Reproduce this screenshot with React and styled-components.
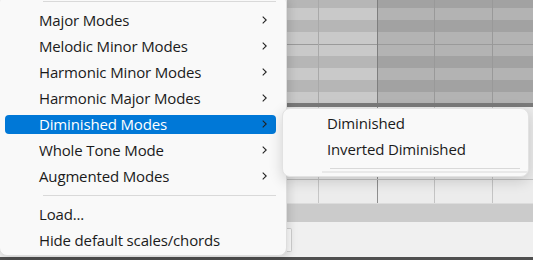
import React from 'react';
import styled, { createGlobalStyle } from 'styled-components';

const GlobalStyle = createGlobalStyle`
  html, body {
    margin: 0;
    padding: 0;
    overflow: hidden;
    background: #f0f0f0;
  }
`;

const Stage = styled.div`
  position: relative;
  width: 533px;
  height: 260px;
  overflow: hidden;
  font-family: 'Open Sans', 'Noto Sans', sans-serif;
  background: #f0f0f0;
`;

const Workspace = styled.div`
  display: flex;
  height: 257px;
`;

const LeftPane = styled.div`
  width: 287px;
  background: #f0f0f0;
`;

const RightPane = styled.div`
  flex: 1;
  display: flex;
  flex-direction: column;
`;

const BottomStrip = styled.div`
  height: 3px;
  background: #4f4f4f;
`;

// piano roll stripes: black-key rows darker, one E/F style boundary line
const tones = {
  light: { hi: '#c9c9c9', lo: '#b6b6b6' },
  dark: { hi: '#b3b3b3', lo: '#a2a2a2' },
};

const stripes = ({ $tone }) => {
  const { hi, lo } = tones[$tone];
  return `linear-gradient(to bottom,
    ${lo} 0 8px, ${hi} 8px 20.5px, ${lo} 20.5px 32.5px, ${hi} 32.5px 44.5px,
    #9a9a9a 44.5px 45.5px, ${hi} 45.5px 56.5px, ${lo} 56.5px 68.5px,
    ${hi} 68.5px 80.5px, ${lo} 80.5px 92.5px, ${hi} 92.5px 103px)`;
};

const Lane = styled.div`
  display: flex;
  height: ${p => p.$h}px;
  background: ${p => p.$bg || 'transparent'};
`;

const RollColumn = styled.div`
  width: ${p => p.$w}px;
  flex: ${p => (p.$w ? 'none' : 1)};
  background: ${stripes};
  border-left: ${p => (p.$line ? `1px solid ${p.$line}` : 'none')};
`;

const TrackColumn = styled.div`
  width: ${p => p.$w}px;
  flex: ${p => (p.$w ? 'none' : 1)};
  border-left: ${p => (p.$line ? `1px solid ${p.$line}` : 'none')};
`;

const RollDivider = styled.div`
  height: 4px;
  background: #7a7a7a;
`;

const LaneLine = styled.div`
  height: 1px;
  background: #c2c2c2;
`;

const GrayBar = styled.div`
  height: 18px;
  background: #cbcbcb;
  border-top: 1px solid #dcdcdc;
`;

const Footer = styled.div`
  flex: 1;
  padding-top: 6px;
  background: #f0f0f0;
`;

const InputStub = styled.div`
  width: 4px;
  height: 22px;
  background: #fbfbfb;
  border: 1px solid #cfcfcf;
  border-left: none;
  border-radius: 0 2px 2px 0;
`;

const MainMenu = styled.div`
  position: absolute;
  left: -1px;
  top: -6px;
  width: 286px;
  height: 260px;
  background: #f9f9f9;
  border: 1px solid #dedede;
  border-radius: 8px;
  box-shadow: 2px 3px 10px rgba(0, 0, 0, 0.14);
  overflow: hidden;
`;

const SubMenu = styled.div`
  position: absolute;
  left: 282px;
  top: 108px;
  width: 245px;
  height: 66px;
  padding-top: 1px;
  background: #f9f9f9;
  border: 1px solid #e2e2e2;
  border-radius: 8px;
  box-shadow: 0 4px 14px rgba(0, 0, 0, 0.16);
  overflow: hidden;
`;

const Separator = styled.div`
  height: ${p => p.$h || 12}px;
  display: flex;
  align-items: ${p => p.$align || 'center'};
  padding: 0 ${p => p.$right}px 0 ${p => p.$left}px;

  &::after {
    content: '';
    flex: 1;
    height: 1px;
    background: #d9d9d9;
  }
`;

const FadeBand = styled.div`
  height: 2px;
  margin: 2px 0 0 39px;
  background: #e9e9e9;
`;

const Item = styled.div`
  height: 26px;
  display: flex;
  align-items: center;
  padding: 0 ${p => p.$right}px 0 ${p => p.$left}px;
`;

const ItemBody = styled.div`
  flex: 1;
  height: 19px;
  display: flex;
  align-items: center;
  padding: 0 9px 0 ${p => p.$indent}px;
  border-radius: 4px;
  background: ${p => (p.$active ? '#0078d7' : 'transparent')};
  color: ${p => (p.$active ? '#ffffff' : '#1b1b1b')};
  font-size: 15px;
  line-height: 19px;
  letter-spacing: -0.15px;
  white-space: nowrap;
`;

const Label = styled.span`
  flex: 1;
`;

const Chevron = () => (
  <svg width="5" height="8" viewBox="0 0 5 8">
    <path d="M0.7 0.6 L4.2 4 L0.7 7.4" fill="none" stroke="#222" strokeWidth="1.1" />
  </svg>
);

const beats = [
  { w: 31, tone: 'light' },
  { w: 58, tone: 'light', line: '#a9a9a9', track: '#c6c6c6' },
  { w: 56, tone: 'dark', line: '#7e7e7e', track: '#8e8e8e' },
  { w: 57, tone: 'dark', line: '#999999', track: '#c4c4c4' },
  { tone: 'dark', line: '#999999', track: '#c4c4c4' },
];

const mainItems = [
  'Major Modes',
  'Melodic Minor Modes',
  'Harmonic Minor Modes',
  'Harmonic Major Modes',
  'Diminished Modes',
  'Whole Tone Mode',
  'Augmented Modes',
];

const TrackLane = ({ h, bg }) => (
  <Lane $h={h} $bg={bg}>
    {beats.map((b, i) => (
      <TrackColumn key={i} $w={b.w} $line={b.track} />
    ))}
  </Lane>
);

const App = () => (
  <Stage>
    <GlobalStyle />
    <Workspace>
      <LeftPane />
      <RightPane>
        <Lane $h={103}>
          {beats.map((b, i) => (
            <RollColumn key={i} $w={b.w} $tone={b.tone} $line={b.line} />
          ))}
        </Lane>
        <RollDivider />
        <TrackLane h={72} bg="#ebebeb" />
        <LaneLine />
        <TrackLane h={23} bg="#ececec" />
        <GrayBar />
        <Footer>
          <InputStub />
        </Footer>
      </RightPane>
    </Workspace>
    <BottomStrip />

    <MainMenu>
      <Separator $left={43} $right={10} />
      {mainItems.map(label => (
        <Item key={label} $left={5} $right={10}>
          <ItemBody $indent={34} $active={label === 'Diminished Modes'}>
            <Label>{label}</Label>
            <Chevron />
          </ItemBody>
        </Item>
      ))}
      <Separator $left={43} $right={10} />
      <Item $left={5} $right={10}>
        <ItemBody $indent={34}>Load...</ItemBody>
      </Item>
      <Item $left={5} $right={10}>
        <ItemBody $indent={34}>Hide default scales/chords</ItemBody>
      </Item>
    </MainMenu>

    <SubMenu>
      <Item $left={5} $right={8}>
        <ItemBody $indent={39}>Diminished</ItemBody>
      </Item>
      <Item $left={5} $right={8}>
        <ItemBody $indent={39}>Inverted Diminished</ItemBody>
      </Item>
      <Separator $h={7} $align="flex-end" $left={47} $right={8} />
      <FadeBand />
    </SubMenu>
  </Stage>
);

export default App;
